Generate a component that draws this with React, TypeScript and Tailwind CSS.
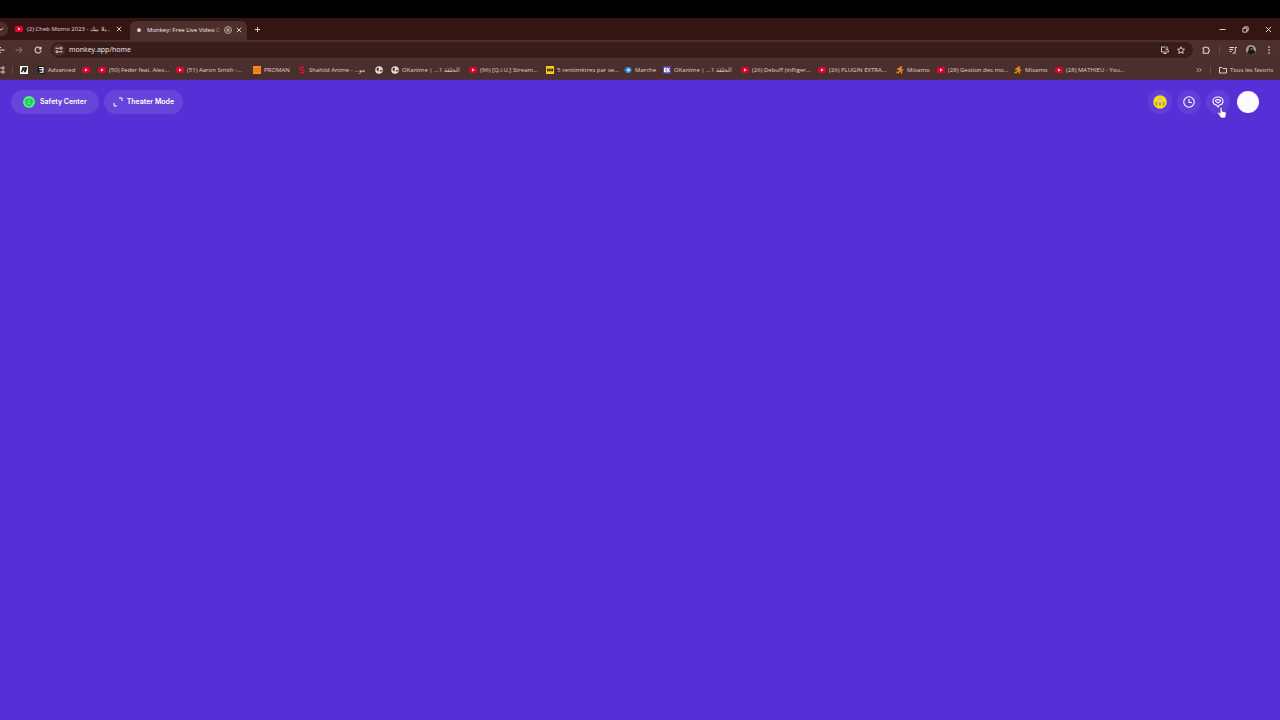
import { clsx } from "clsx";
import type { ReactNode } from "react";

type IconProps = { className?: string };

const YoutubeIcon = ({ className = "w-2 h-2" }: IconProps) => (
    <svg viewBox="0 0 16 16" className={clsx("shrink-0", className)}>
        <rect x="0" y="2" width="16" height="12" rx="3" fill="#e0002d" />
        <path d="M6.200 5 11 8l-4.800 3z" fill="#fff" />
    </svg>
);

const LetterRIcon = () => (
    <svg viewBox="0 0 16 16" className="w-2 h-2 shrink-0">
        <rect width="16" height="16" rx="1" fill="#fff" />
        <path d="M3.500 12.500 6 4h6.500l-1 4H8l3.500 4.500" fill="none" stroke="#111" strokeWidth="3" />
    </svg>
);

const AdvancedIcon = () => (
    <svg viewBox="0 0 16 16" className="w-2 h-2 shrink-0">
        <path d="M1 0h14v16H5l-4-3z" fill="#14181c" />
        <path d="M4 3h8v9.500H5M5 7.500h6" fill="none" stroke="#fff" strokeWidth="2.400" />
    </svg>
);

const PromanIcon = () => (
    <svg viewBox="0 0 16 16" className="w-2 h-2 shrink-0">
        <rect width="16" height="16" fill="#f58a1f" />
        <path d="M1 5.500h14M1 10.500h14" stroke="#b8631a" strokeWidth="1" />
    </svg>
);

const ShahiidIcon = () => (
    <svg viewBox="0 0 16 16" className="w-2 h-2 shrink-0">
        <path d="M12 2.500H6C3.500 2.500 3.500 7 6 7.500l4 1c3 1 2.500 5-.5 5H4" fill="none" stroke="#d8122f" strokeWidth="3" />
    </svg>
);

const GlobeIcon = () => (
    <svg viewBox="0 0 16 16" className="w-2 h-2 shrink-0">
        <circle cx="8" cy="8" r="7.500" fill="#e6dedd" />
        <path d="M3 5 6 3l2.500 1.500L6.500 7 8 9l-2 2-2.500-3zM10 9l3-2 1 2-3 3.500z" fill="#4b2f2c" />
    </svg>
);

const ImdbIcon = () => (
    <svg viewBox="0 0 16 16" className="w-2 h-2 shrink-0">
        <rect width="16" height="16" fill="#f3cf1b" />
        <path d="M2 8h12" stroke="#221c0c" strokeWidth="5" />
        <path d="M5 6v4M8 6v4M11 6v4" stroke="#f3cf1b" strokeWidth=".8" />
    </svg>
);

const MarcheIcon = () => (
    <svg viewBox="0 0 16 16" className="w-2 h-2 shrink-0">
        <path d="M0 8 5 2h7.500L16 8l-3.500 6H5z" fill="#2f83cf" />
        <circle cx="9" cy="8" r="3" fill="#cfe8ff" />
    </svg>
);

const OkanimeIcon = () => (
    <svg viewBox="0 0 16 16" className="w-2 h-2 shrink-0">
        <rect width="16" height="16" rx="1" fill="#56429c" />
        <path d="M3 4.500h3v7H3zM9.500 3v10M13.500 4.500l-3 3.500 3 4" fill="none" stroke="#fff" strokeWidth="2.200" />
    </svg>
);

const MixamoIcon = () => (
    <svg viewBox="0 0 16 16" className="w-2 h-2 shrink-0">
        <circle cx="10" cy="2.500" r="2.200" fill="#f58c22" />
        <path d="M3 7.500 5 5h4l2.500 3h3M8.500 5.500 7 9.500l4 2-.5 4M7 9.500 5 13H1" fill="none" stroke="#f58c22" strokeWidth="2.600" />
    </svg>
);

const icons: Record<string, () => ReactNode> = {
    youtube: YoutubeIcon,
    r: LetterRIcon,
    advanced: AdvancedIcon,
    proman: PromanIcon,
    shahiid: ShahiidIcon,
    globe: GlobeIcon,
    imdb: ImdbIcon,
    marche: MarcheIcon,
    okanime: OkanimeIcon,
    mixamo: MixamoIcon,
};

const bookmarks = [
    { icon: "r", title: "", width: "w-[17px]" },
    { icon: "advanced", title: "Advanced", width: "w-[45px]" },
    { icon: "youtube", title: "", width: "w-4" },
    { icon: "youtube", title: "(50) Feder feat. Alex...", width: "w-[78px]" },
    { icon: "youtube", title: "(51) Aaron Smith -...", width: "w-[77px]" },
    { icon: "proman", title: "PROMAN", width: "w-[45px]" },
    { icon: "shahiid", title: "Shahiid Anime - ...مو", width: "w-[77px]" },
    { icon: "globe", title: "", width: "w-4" },
    { icon: "globe", title: "OKanime | ...1 الحلقة", width: "w-[78px]" },
    { icon: "youtube", title: "(96) [Q.I.U.] Stream...", width: "w-[77px]" },
    { icon: "imdb", title: "5 centimètres par se...", width: "w-[78px]" },
    { icon: "marche", title: "Marche", width: "w-[39px]" },
    { icon: "okanime", title: "OKanime | ...1 الحلقة", width: "w-[78px]" },
    { icon: "youtube", title: "(26) Debuff (infliger...", width: "w-[77px]" },
    { icon: "youtube", title: "(26) PLUGIN EXTRA...", width: "w-[78px]" },
    { icon: "mixamo", title: "Mixamo", width: "w-[41px]" },
    { icon: "youtube", title: "(28) Gestion des mo...", width: "w-[77px]" },
    { icon: "mixamo", title: "Mixamo", width: "w-[41px]" },
    { icon: "youtube", title: "(28) MATHIEU - You...", width: "w-[78px]" },
];

const Line = ({ d, className, width = 1.6 }: { d: string; className?: string; width?: number }) => (
    <svg viewBox="0 0 16 16" className={clsx("shrink-0", className)} fill="none" stroke="currentColor" strokeWidth={width}>
        <path d={d} />
    </svg>
);

const CLOSE = "M2 2l12 12M14 2 2 14";

const TabStrip = () => (
    <div className="flex h-[22px] items-stretch bg-[#351514] text-[#e5d6d4]">
        <button aria-label="Search tabs" className="my-1 flex w-2 items-center rounded-r-md bg-[#4b2f2c]">
            <Line d="M2 5l6 6 6-6" width={2.5} className="-ml-[2px] h-[6px] w-[6px]" />
        </button>
        <div className="flex w-[122px] items-center pl-[7px] pr-2">
            <YoutubeIcon />
            <span dir="ltr" className="ml-1 flex-1 whitespace-nowrap">(2) Cheb Momo 2023 - يلا بيك ,</span>
            <button aria-label="Close tab"><Line d={CLOSE} width={2.4} className="h-[6px] w-[6px]" /></button>
        </div>
        <div className="mt-[3px] flex w-[117px] items-center rounded-t-md bg-[#4d302d] pl-[6px] pr-[5px] pb-[2px]">
            <svg viewBox="0 0 16 16" className="h-[6px] w-[6px] shrink-0">
                <path d="M8 2l5 4v5l-5 3-5-3V6z" fill="#d9cac8" />
            </svg>
            <span className="ml-[5px] w-[73px] whitespace-nowrap text-[#f6ecea]">
                Monkey: Free Live Video <span className="text-[#a58f8c]">C</span>
            </span>
            <svg viewBox="0 0 16 16" className="ml-1 h-2 w-2 shrink-0" fill="none" stroke="#d3bfbc" strokeWidth="1.500">
                <circle cx="8" cy="8" r="7" />
                <circle cx="8" cy="8" r="4" strokeWidth="1" />
                <circle cx="8" cy="8" r="1.500" fill="#d3bfbc" />
            </svg>
            <button aria-label="Close tab" className="ml-auto"><Line d={CLOSE} width={2.4} className="h-[6px] w-[6px]" /></button>
        </div>
        <button aria-label="New tab" className="ml-[7px]"><Line d="M8 2v12M2 8h12" width={2.2} className="h-[7px] w-[7px]" /></button>
        <div className="ml-auto flex items-center gap-4 pr-2">
            <button aria-label="Minimize"><Line d="M1 8h14" width={2.2} className="h-[7px] w-[7px]" /></button>
            <button aria-label="Restore"><Line d="M2 5h9v9H2zM5 5V2h9v9h-3" width={2} className="h-[7px] w-[7px]" /></button>
            <button aria-label="Close"><Line d={CLOSE} width={2.2} className="h-[7px] w-[7px]" /></button>
        </div>
    </div>
);

const Toolbar = () => (
    <div className="flex h-5 items-center bg-[#4d302d] text-[#e5d6d4]">
        <button aria-label="Back" className="-ml-[3px]"><Line d="M15 8H2M8 2 2 8l6 6" width={2} className="h-2 w-2" /></button>
        <button aria-label="Forward" className="ml-[10px] text-[#927a77]"><Line d="M1 8h13M8 2l6 6-6 6" width={2} className="h-2 w-2" /></button>
        <button aria-label="Reload" className="ml-[11px]"><Line d="M13 4.500A6 6 0 1 0 14 9M14 1.500V6H9.500" width={2.2} className="h-2 w-2" /></button>
        <div className="ml-[9px] flex h-4 flex-1 items-center rounded-full bg-[#391d1c] pl-[2px] pr-2">
            <span className="mr-1 grid h-3 w-3 place-items-center rounded-full bg-[#4d302d]">
                <Line d="M1 4.500h7M12 2.500a2 2 0 1 1 0 4 2 2 0 0 1 0-4M15 11.500H8M4 9.500a2 2 0 1 1 0 4 2 2 0 0 1 0-4" width={2} className="h-2 w-2" />
            </span>
            <input aria-label="Address" defaultValue="monkey.app/home" className="min-w-0 flex-1 bg-transparent text-[7px] text-[#f4eae8] outline-none" />
            <button aria-label="Install app"><Line d="M9 2H1v10h14V9M5 15h6M12 1v7M9 5.500l3 3 3-3" width={1.8} className="h-2 w-2" /></button>
            <button aria-label="Bookmark" className="ml-2"><Line d="M8 1.500l2 4.500 5 .5-3.800 3.300 1.200 5L8 12.200l-4.400 2.600 1.200-5L1 6.500 6 6z" width={1.8} className="h-2 w-2" /></button>
        </div>
        <div className="flex items-center pl-[9px] pr-[7px]">
            <button aria-label="Extensions"><Line d="M2 3.500h3.500V2h4v1.500H13V7h1.500v4H13v3.500H2V11h1.500V7H2z" width={2} className="h-2 w-2" /></button>
            <span className="ml-[9px] h-2 w-px bg-[#674b48]" />
            <button aria-label="Media" className="ml-[9px]"><Line d="M1 3h9M1 7h7M1 11h4M12.500 12V3H16M12 13.500a2 2 0 1 1-3 0 2 2 0 0 1 3 0" width={2} className="h-2 w-2" /></button>
            <button aria-label="Profile" className="ml-[9px]">
                <svg viewBox="0 0 20 20" className="h-[10px] w-[10px]">
                    <circle cx="10" cy="10" r="10" fill="#ab9b9c" />
                    <path d="M2 16 5 11l1-6 4-2 4 2 1 5 4 3a10 10 0 0 1-17 3z" fill="#201719" />
                    <circle cx="11" cy="8" r="2" fill="#a86a60" />
                </svg>
            </button>
            <button aria-label="Menu" className="ml-[9px]">
                <svg viewBox="0 0 16 16" className="h-2 w-2" fill="currentColor">
                    <circle cx="8" cy="2" r="1.700" />
                    <circle cx="8" cy="8" r="1.700" />
                    <circle cx="8" cy="14" r="1.700" />
                </svg>
            </button>
        </div>
    </div>
);

const BookmarksBar = () => (
    <div className="flex h-5 items-center border-b border-[#4b2b5a] bg-[#4b2f2c] text-[#e0d0ce]">
        <button aria-label="Apps" className="-ml-[3px]"><Line d="M2 2h4v4H2zM10 2h4v4h-4zM2 10h4v4H2zM10 10h4v4h-4z" width={1.8} className="h-2 w-2" /></button>
        <span className="mx-[7px] h-2 w-px shrink-0 bg-[#674b48]" />
        <nav className="flex min-w-0 flex-1 overflow-hidden">
            {bookmarks.map((b, i) => {
                const Icon = icons[b.icon];
                return (
                    <a key={i} href="#" aria-label={b.title || b.icon} className={clsx("flex shrink-0 items-center gap-[3px] whitespace-nowrap", b.width)}>
                        <Icon />
                        <span dir="ltr">{b.title}</span>
                    </a>
                );
            })}
        </nav>
        <button aria-label="More bookmarks"><Line d="M2 3l5 5-5 5M9 3l5 5-5 5" width={2} className="h-[6px] w-[6px]" /></button>
        <span className="mx-2 h-2 w-px bg-[#674b48]" />
        <button className="flex items-center gap-[3px] pr-[7px]">
            <Line d="M1 3h5l2 2h7v9H1z" width={2} className="h-2 w-2" />
            Tous les favoris
        </button>
    </div>
);

const roundButton = "grid h-6 w-6 place-items-center rounded-full bg-white/7";
const pillButton = "flex h-6 items-center rounded-full bg-white/10 text-[7px] font-semibold";

const MonkeyHeader = () => (
    <header className="flex items-center justify-between px-[11px] pt-[10px] text-white">
        <div className="flex gap-[5px] font-['Inter',sans-serif]">
            <button className={clsx(pillButton, "gap-[5px] px-3")}>
                <svg viewBox="0 0 24 24" className="h-3 w-3">
                    <circle cx="12" cy="12" r="12" fill="#48f27c" />
                    <path d="M6 8c3 0 5-1 6-2 1 1 3 2 6 2v4c0 4-3 6-6 7-3-1-6-3-6-7z" fill="none" stroke="#17934f" strokeWidth="2" />
                    <path d="M9 12l2 2 4-4" fill="none" stroke="#17934f" strokeWidth="2" />
                </svg>
                Safety Center
            </button>
            <button className={clsx(pillButton, "gap-1 px-[9px]")}>
                <svg viewBox="0 0 20 20" className="h-[10px] w-[10px]" fill="none" stroke="currentColor" strokeWidth="2">
                    <path d="M12 2h6v6M2 12v6h6" />
                </svg>
                Theater Mode
            </button>
        </div>
        <div className="relative flex items-center gap-[5px] pr-[10px]">
            <button aria-label="Coins" className={roundButton}>
                <svg viewBox="0 0 28 28" className="h-[14px] w-[14px]">
                    <circle cx="14" cy="14" r="13.500" fill="#f6df21" />
                    <path d="M5 21v-8l4 2 2-7 3-3 3 3 2 7 4-2v8z" fill="#b99710" />
                    <path d="M10 21v-4l4-8 4 8v4" fill="none" stroke="#fff27a" strokeWidth="2.500" />
                </svg>
            </button>
            <button aria-label="History" className={roundButton}>
                <svg viewBox="0 0 24 24" className="h-3 w-3" fill="none" stroke="currentColor" strokeWidth="2.200">
                    <circle cx="12" cy="12" r="10.500" />
                    <path d="M12 6v7h6" />
                </svg>
            </button>
            <button aria-label="Messages" className={roundButton}>
                <svg viewBox="0 0 24 24" className="h-3 w-3" fill="none" stroke="currentColor" strokeWidth="2.200">
                    <path d="M12 2c6 0 10 3.500 10 8s-3 7.500-7 8l-3 4-3-4c-4-.5-7-3.500-7-8s4-8 10-8z" />
                    <path d="M12 14c-3-1.500-5-2.500-5-4.500S10.500 6.500 12 8c1.500-1.500 5-.5 5 1.500s-2 3-5 4.500z" />
                </svg>
            </button>
            <button aria-label="Account" className="ml-[2px] h-[22px] w-[22px] rounded-full bg-[#fbfaff]" />
            <svg viewBox="0 0 20 26" className="absolute right-[42px] top-[17px] h-3 w-[10px]">
                <path d="M6 2c0-2 4-2 4 0v7l7 2c2 .5 2.500 2 2 4l-2 9H8l-7-10c-1-2 1-3 3-2l2 2z" fill="#fff" stroke="#302060" strokeWidth="1" />
            </svg>
        </div>
    </header>
);

const App = () => {
    return (
        <div className="min-h-screen bg-[#5630d6] font-['Open_Sans','Noto_Sans',sans-serif] text-[6px] leading-[10px]">
            <div className="h-[18px] bg-black" />
            <TabStrip />
            <Toolbar />
            <BookmarksBar />
            <MonkeyHeader />
        </div>
    );
};

export default App;
